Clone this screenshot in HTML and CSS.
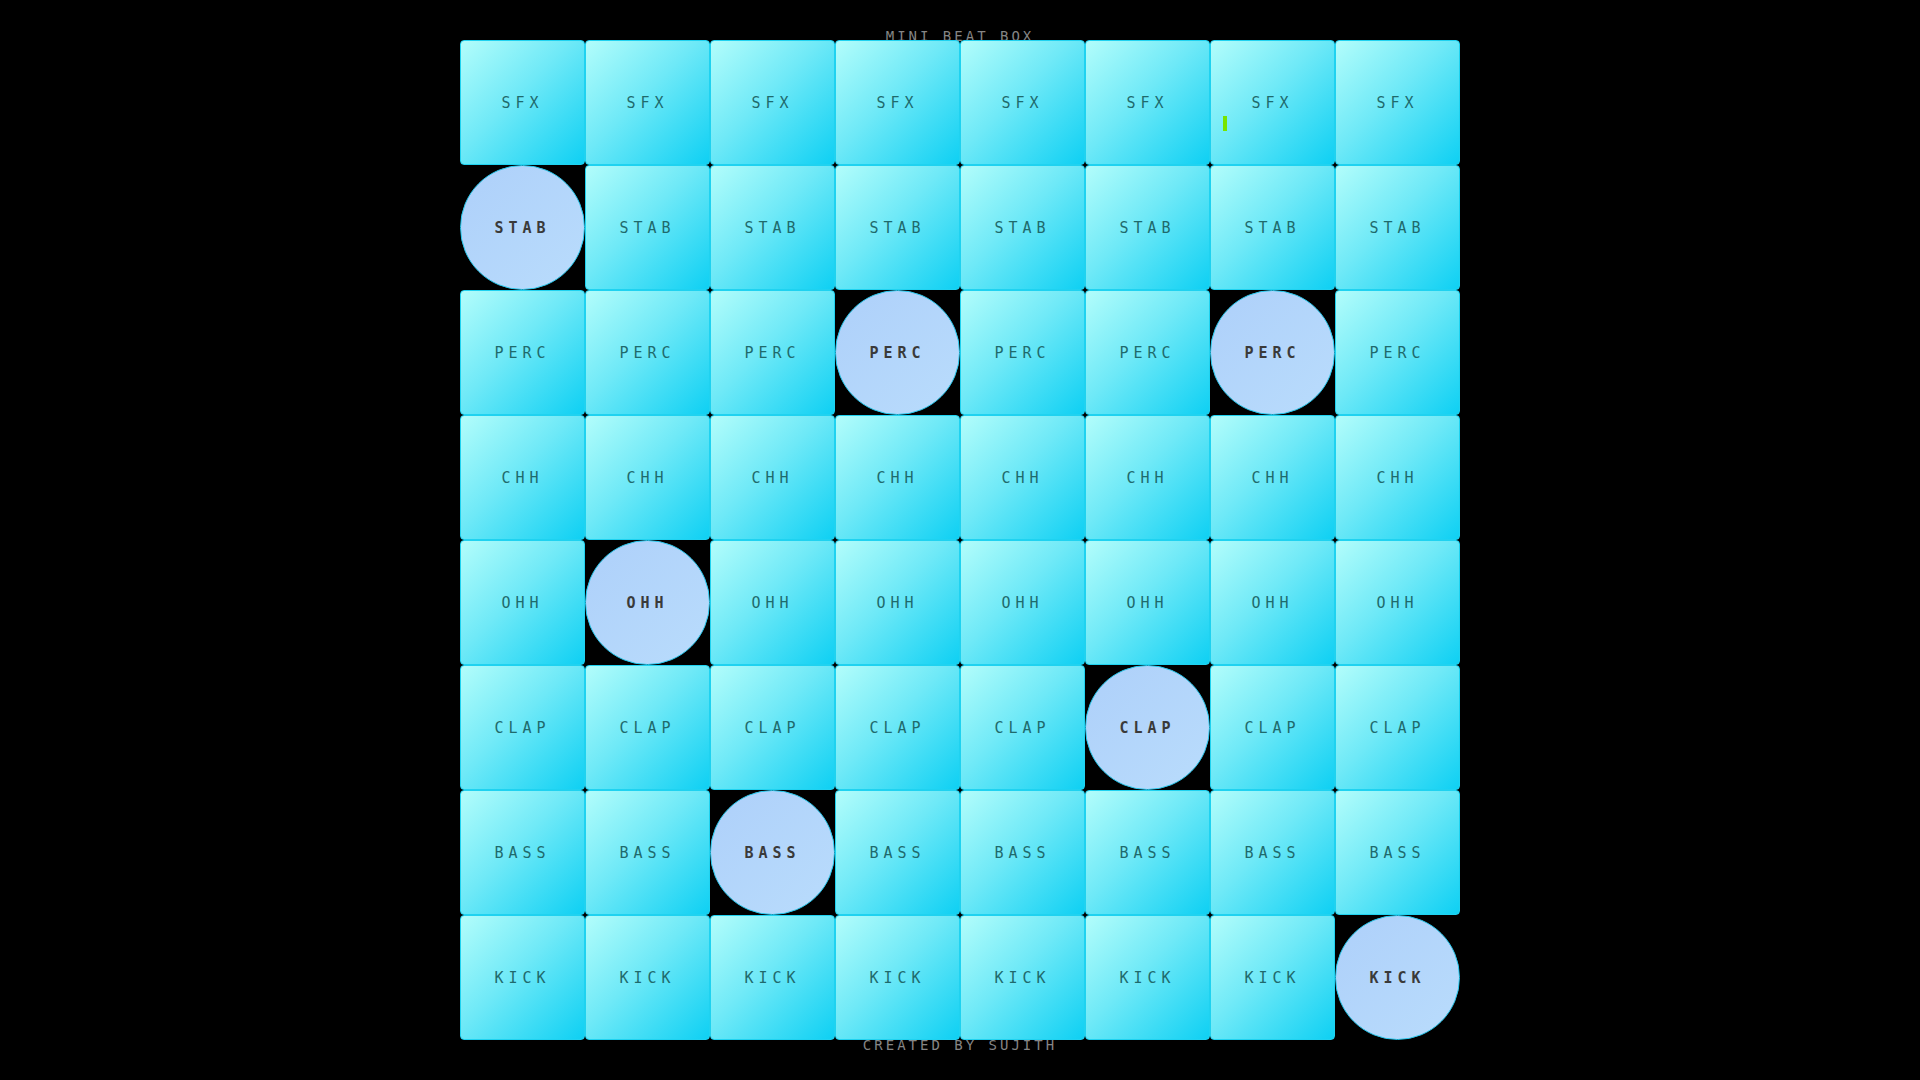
FILE: index.html
```html
<!DOCTYPE html>
<html>
<head>
<link rel="stylesheet" href="styles.css">
</head>
<body>
<div class="box">
<h1 class="title">MINI BEAT BOX</h1>
<div class="pads">
<div class="pad">SFX</div><div class="pad">SFX</div><div class="pad">SFX</div><div class="pad">SFX</div><div class="pad">SFX</div><div class="pad">SFX</div><div class="pad">SFX<span class="caret"></span></div><div class="pad">SFX</div>
<div class="pad on">STAB</div><div class="pad">STAB</div><div class="pad">STAB</div><div class="pad">STAB</div><div class="pad">STAB</div><div class="pad">STAB</div><div class="pad">STAB</div><div class="pad">STAB</div>
<div class="pad">PERC</div><div class="pad">PERC</div><div class="pad">PERC</div><div class="pad on">PERC</div><div class="pad">PERC</div><div class="pad">PERC</div><div class="pad on">PERC</div><div class="pad">PERC</div>
<div class="pad">CHH</div><div class="pad">CHH</div><div class="pad">CHH</div><div class="pad">CHH</div><div class="pad">CHH</div><div class="pad">CHH</div><div class="pad">CHH</div><div class="pad">CHH</div>
<div class="pad">OHH</div><div class="pad on">OHH</div><div class="pad">OHH</div><div class="pad">OHH</div><div class="pad">OHH</div><div class="pad">OHH</div><div class="pad">OHH</div><div class="pad">OHH</div>
<div class="pad">CLAP</div><div class="pad">CLAP</div><div class="pad">CLAP</div><div class="pad">CLAP</div><div class="pad">CLAP</div><div class="pad on">CLAP</div><div class="pad">CLAP</div><div class="pad">CLAP</div>
<div class="pad">BASS</div><div class="pad">BASS</div><div class="pad on">BASS</div><div class="pad">BASS</div><div class="pad">BASS</div><div class="pad">BASS</div><div class="pad">BASS</div><div class="pad">BASS</div>
<div class="pad">KICK</div><div class="pad">KICK</div><div class="pad">KICK</div><div class="pad">KICK</div><div class="pad">KICK</div><div class="pad">KICK</div><div class="pad">KICK</div><div class="pad on">KICK</div>
</div>
<p class="credit">CREATED BY SUJITH</p>
</div>
</body>
</html>
```

FILE: styles.css
```css
body {
margin: 0;
background: #000;
font-family: "DejaVu Sans Mono", monospace;
}
.box {
display: flex;
flex-direction: column;
align-items: center;
height: 100vh;
}
.title {
margin: 28px 0 0 0;
font-size: 14px;
line-height: 16px;
font-weight: normal;
letter-spacing: 3px;
color: #858585;
}
.pads {
position: relative;
z-index: 1;
margin-top: -4px;
display: grid;
grid-template-columns: repeat(8, 125px);
grid-template-rows: repeat(8, 125px);
}
.pad {
position: relative;
box-sizing: border-box;
display: flex;
align-items: center;
justify-content: center;
padding-top: 1px;
border: 1px solid #1fd2f0;
border-radius: 4px;
background: linear-gradient(135deg, #b2fdfb 0%, #6fe9f7 45%, #0fd0f3 100%);
font-size: 15px;
letter-spacing: 5px;
color: #1f6a6c;
}
.pad.on {
border-radius: 50%;
border-color: #28c9ee;
background: linear-gradient(135deg, #aed0fa 0%, #b9dcfc 100%);
color: #3a3a3a;
font-weight: bold;
}
.caret {
position: absolute;
left: 12px;
top: 75px;
width: 4px;
height: 15px;
background: #78e400;
}
.credit {
margin: -3px 0 0 0;
font-size: 14px;
line-height: 16px;
letter-spacing: 3px;
color: #858585;
}
```
